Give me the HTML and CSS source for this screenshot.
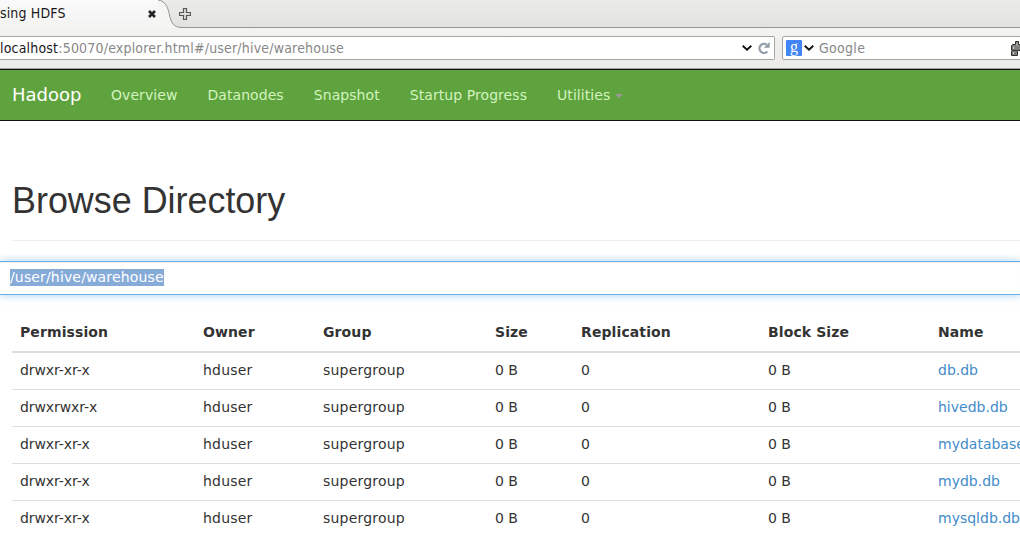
FILE: index.html
```
<!DOCTYPE html>
<html lang="en">

<head>
    <meta charset="UTF-8">
    <meta name="viewport" content="width=device-width, initial-scale=1.0">
    <title>Browsing HDFS</title>
    <link rel="stylesheet" href="styles.css">
</head>

<body>
    <div class="tab-bar">
        <div class="tab">
            <span class="tab-title">sing HDFS</span>
            <svg class="tab-close" width="8" height="8" viewBox="0 0 8 8">
                <path d="M1 1L7 7M7 1L1 7" stroke="#222" stroke-width="2.6" />
            </svg>
        </div>
        <svg class="tab-curve" width="24" height="28" viewBox="0 0 24 28">
            <path d="M0 0C8 1 10 8 11.5 15C13 22 15 27.5 24 27.5V28H0Z" fill="#f5f5f4" />
            <path d="M0 0C8 1 10 8 11.5 15C13 22 15 27.5 24 27.5" fill="none" stroke="#949492" />
        </svg>
        <svg class="tab-new" width="12" height="12" viewBox="0 0 12 12">
            <path d="M4.5 .5h3v4h4v3h-4v4h-3v-4h-4v-3h4z" fill="#dcdcda" stroke="#555753" stroke-width="1.2" />
        </svg>
    </div>

    <div class="toolbar">
        <div class="url-box">
            <span class="url"><b>localhost</b>:50070/explorer.html#/user/hive/warehouse</span>
            <svg class="arrow" width="10" height="6" viewBox="0 0 10 6">
                <path d="M.7 .8L5 4.7L9.3 .8" fill="none" stroke="#111" stroke-width="1.9" />
            </svg>
            <svg class="reload" width="12" height="12" viewBox="0 0 12 12">
                <path d="M9.4 9.6A4.6 4.6 0 1 1 8.6 2.5" fill="none" stroke="#8f9ba8" stroke-width="2.2" />
                <path d="M11.6 0V5.8H5.8Z" fill="#8f9ba8" />
            </svg>
        </div>
        <div class="search-box">
            <span class="engine">g</span>
            <svg class="arrow" width="10" height="6" viewBox="0 0 10 6">
                <path d="M.7 .8L5 4.7L9.3 .8" fill="none" stroke="#111" stroke-width="1.9" />
            </svg>
            <span class="placeholder">Google</span>
            <svg class="binoculars" width="18" height="15" viewBox="0 0 18 15">
                <path d="M4.5 .5H7.5V3.5H10.5V.5H13.5V3.5H15.5L17.5 6V9H16.5V14.5H11.5V9.5H6.5V14.5H.5V10.5L1.5 9H.5V4.5L2 3.5H4.5Z" fill="#7d807b" stroke="#303230" />
                <path d="M2.5 5.5V8M2.5 11V13M6 2V5" stroke="#c6c9c4" />
                <path d="M1 9.5H6" stroke="#303230" />
            </svg>
        </div>
    </div>

    <nav class="navbar">
        <a class="navbar-brand">Hadoop</a>
        <a class="nav-link">Overview</a>
        <a class="nav-link">Datanodes</a>
        <a class="nav-link">Snapshot</a>
        <a class="nav-link">Startup Progress</a>
        <a class="nav-link">Utilities <span class="caret"></span></a>
    </nav>

    <div class="container">
        <div class="page-header">
            <h1>Browse Directory</h1>
        </div>
        <div class="path-input"><span class="selected">/user/hive/warehouse</span></div>
        <table class="table">
            <thead>
                <tr>
                    <th class="col-permission">Permission</th>
                    <th class="col-owner">Owner</th>
                    <th class="col-group">Group</th>
                    <th class="col-size">Size</th>
                    <th class="col-replication">Replication</th>
                    <th class="col-block">Block Size</th>
                    <th>Name</th>
                </tr>
            </thead>
            <tbody>
                <tr>
                    <td class="narrow">drwxr-xr-x</td>
                    <td class="wide">hduser</td>
                    <td class="wide">supergroup</td>
                    <td>0 B</td>
                    <td>0</td>
                    <td>0 B</td>
                    <td><a>db.db</a></td>
                </tr>
                <tr>
                    <td class="narrow">drwxrwxr-x</td>
                    <td class="wide">hduser</td>
                    <td class="wide">supergroup</td>
                    <td>0 B</td>
                    <td>0</td>
                    <td>0 B</td>
                    <td><a>hivedb.db</a></td>
                </tr>
                <tr>
                    <td class="narrow">drwxr-xr-x</td>
                    <td class="wide">hduser</td>
                    <td class="wide">supergroup</td>
                    <td>0 B</td>
                    <td>0</td>
                    <td>0 B</td>
                    <td><a>mydatabase.db</a></td>
                </tr>
                <tr>
                    <td class="narrow">drwxr-xr-x</td>
                    <td class="wide">hduser</td>
                    <td class="wide">supergroup</td>
                    <td>0 B</td>
                    <td>0</td>
                    <td>0 B</td>
                    <td><a>mydb.db</a></td>
                </tr>
                <tr>
                    <td class="narrow">drwxr-xr-x</td>
                    <td class="wide">hduser</td>
                    <td class="wide">supergroup</td>
                    <td>0 B</td>
                    <td>0</td>
                    <td>0 B</td>
                    <td><a>mysqldb.db</a></td>
                </tr>
            </tbody>
        </table>
    </div>
</body>

</html>
```
FILE: styles.css
```
* {
    box-sizing: border-box;
}

body {
    margin: 0;
    height: 535px;
    overflow: hidden;
    background: #fff;
    font-family: "DejaVu Sans", sans-serif;
    font-size: 14px;
    line-height: 20px;
    color: #333;
}

svg {
    display: block;
    flex: none;
}

/* Browser tabs */

.tab-bar {
    display: flex;
    height: 28px;
    background: linear-gradient(#ebebe9, #e2e2e0);
    box-shadow: inset 0 -1px #949492;
    font-family: "DejaVu Sans Condensed", "DejaVu Sans", sans-serif;
    font-stretch: condensed;
}

.tab {
    display: flex;
    align-items: center;
    justify-content: space-between;
    width: 158px;
    padding-right: 2px;
    background: linear-gradient(#fafafa, #f3f3f2);
}

.tab-title {
    margin-top: -2px;
    letter-spacing: 0.15px;
    color: #1a1a1a;
}

.tab-curve {
    margin-right: -3px;
}

.tab-new {
    margin-top: 8px;
}

/* Address and search boxes */

.toolbar {
    display: flex;
    gap: 7px;
    height: 41px;
    padding-top: 8px;
    background: linear-gradient(#f3f3f2, #ebeae8);
    border-bottom: 1px solid #a3a3a0;
    font-family: "DejaVu Sans Condensed", "DejaVu Sans", sans-serif;
    font-stretch: condensed;
    letter-spacing: 0.19px;
}

.url-box,
.search-box {
    display: flex;
    flex: none;
    align-items: center;
    height: 24px;
    background: #fff;
    border: 1px solid #a5a5a1;
    border-radius: 2px;
}

.url-box {
    width: 775px;
    border-left: none;
    padding-right: 4px;
    border-radius: 0 2px 2px 0;
}

.url {
    flex: 1;
    color: #888;
}

.url b {
    font-weight: normal;
    color: #1a1a1a;
}

.reload {
    margin-left: 6px;
}

.search-box {
    width: 270px;
    padding-left: 3px;
}

.engine {
    width: 16px;
    height: 16px;
    margin-right: 2px;
    background: #4285f4;
    border-radius: 1px;
    color: #fff;
    font-family: "Liberation Serif", serif;
    font-size: 16px;
    line-height: 13px;
    letter-spacing: 0;
    text-align: center;
}

.placeholder {
    width: 191px;
    margin-left: 5px;
    letter-spacing: 0.3px;
    color: #888;
}

.binoculars {
    margin-left: 1px;
}

/* Navbar */

.navbar {
    display: flex;
    height: 52px;
    padding-left: 12px;
    background: #5fa33e;
    border-top: 1px solid #101010;
    border-bottom: 1px solid #101010;
}

.navbar-brand {
    padding: 15px 14.5px 15px 0;
    font-size: 18px;
    color: #fff;
}

.nav-link {
    padding: 15px;
    letter-spacing: 0.07px;
    color: #d2f3bf;
}

.caret {
    display: inline-block;
    margin-left: 0;
    vertical-align: middle;
    border-top: 4px solid #999;
    border-left: 4px solid transparent;
    border-right: 4px solid transparent;
}

/* Directory listing */

.page-header {
    margin: 60px 0 20px 12px;
    height: 60px;
    border-bottom: 1px solid #eee;
}

h1 {
    margin: 0;
    font-family: "Liberation Sans", sans-serif;
    font-size: 37.5px;
    font-weight: normal;
    line-height: 38px;
    transform: scaleX(0.957);
    transform-origin: left;
}

.path-input {
    height: 34px;
    padding: 5px 10px;
    border: 1px solid #66afe9;
    border-width: 1px 0;
    box-shadow: inset 0 1px 1px rgba(0, 0, 0, 0.075), 0 0 8px rgba(102, 175, 233, 0.6);
    letter-spacing: 0.15px;
    color: #fff;
}

.selected {
    padding-bottom: 1px;
    background: #86abd9;
}

.table {
    width: 1008px;
    margin: 20px 0 0 12px;
    table-layout: fixed;
    border-spacing: 0;
}

th,
td {
    padding: 7px 8px 9px;
    border-bottom: 1px solid #ddd;
    text-align: left;
}

th {
    border-bottom-width: 2px;
    letter-spacing: 0.1px;
}

.wide {
    letter-spacing: 0.2px;
}

.narrow {
    letter-spacing: -0.1px;
}

td a {
    color: #428bca;
}

.col-permission {
    width: 183px;
}

.col-owner {
    width: 120px;
}

.col-group {
    width: 172px;
}

.col-size {
    width: 86px;
}

.col-replication {
    width: 187px;
}

.col-block {
    width: 170px;
}
```
